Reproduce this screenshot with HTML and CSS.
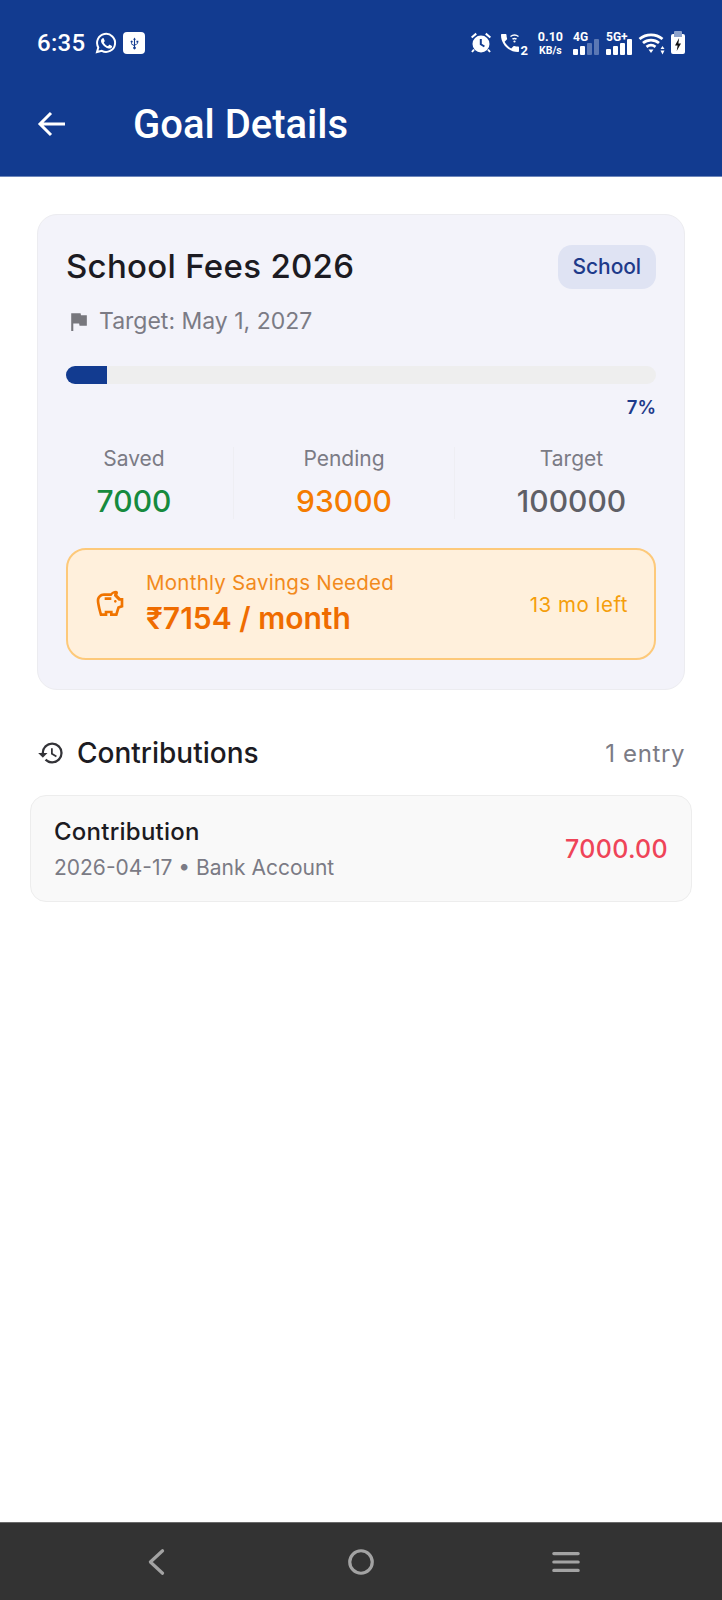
FILE: index.html
```html
<!DOCTYPE html>
<html lang="en">
<head>
  <meta charset="UTF-8" />
  <meta name="viewport" content="width=device-width, initial-scale=1.0"/>
  <title>Goal Details</title>

  <link rel="stylesheet" href="styles.css">
</head>
<body>

  <!-- Header with phone status bar -->
  <header class="app-header">
    <div class="status-bar">
      <div class="status-left">
        <span class="status-time">6:35</span>
        <svg class="icon-whatsapp" viewBox="0 0 24 24">
          <path class="wa-ring" d="M3 21l1.3-4.6A9 9 0 1 1 7.8 19.8z"/>
          <path class="wa-phone" d="M9 7.2c-.3 0-.7.1-1 .5-.4.4-1 1-1 2.300 0 1.300 1 2.600 1.100 2.800.1.200 1.900 3 4.700 4.100 2.300.9 2.800.7 3.300.7.500-.1 1.600-.7 1.800-1.300.2-.6.2-1.200.2-1.300-.1-.1-.3-.2-.5-.3l-1.900-.9c-.3-.1-.5-.1-.7.1l-.8 1.100c-.2.200-.3.200-.6.100-.3-.2-1.200-.5-2.200-1.400-.8-.7-1.400-1.600-1.500-1.900-.2-.3 0-.4.100-.6l.7-.9c.1-.2.1-.3 0-.5l-.9-2.100c-.2-.5-.5-.6-.7-.6z"/>
        </svg>
        <span class="usb-badge">
          <svg viewBox="0 0 12 14">
            <path d="M6 0.500L7.500 3H6.600V8.200L8.800 6.900V5.800H8.100V3.900H10.200V5.800H9.500V7.400L6.600 9.100V10.600A1.400 1.400 0 1 1 5.400 10.600V9.700L2.500 7.900V5.900A1.100 1.100 0 1 1 3.300 5.900V7.400L5.400 8.700V3H4.500Z"/>
          </svg>
        </span>
      </div>

      <div class="status-right">
        <svg class="icon-alarm" viewBox="0 0 24 24">
          <path d="M22 5.720l-4.600-3.860-1.290 1.530 4.600 3.860L22 5.720zM7.880 3.390L6.600 1.860 2 5.710l1.290 1.530 4.590-3.850z"/>
          <circle cx="12" cy="13" r="8.500"/>
          <path class="alarm-hand" d="M11.800 8v5.300l3.600 2.200"/>
          <path d="M5 18.500l-2 2.500M19 18.500l2 2.500" class="alarm-leg"/>
        </svg>
        <span class="call-group">
          <svg class="icon-call" viewBox="0 0 24 24">
            <path d="M6.620 10.790c1.440 2.830 3.760 5.140 6.590 6.590l2.200-2.200c.27-.27.67-.36 1.020-.24 1.120.37 2.330.57 3.570.57.550 0 1 .45 1 1V20c0 .55-.45 1-1 1-9.390 0-17-7.610-17-17 0-.55.45-1 1-1h3.500c.55 0 1 .45 1 1 0 1.250.2 2.450.57 3.570.11.35.03.74-.25 1.020l-2.200 2.200z"/>
            <path class="call-wave" d="M12.500 5.500a7 7 0 0 1 8 0M14.500 8a4 4 0 0 1 4 0"/>
            <circle cx="16.500" cy="10.500" r="1.100"/>
          </svg>
          <span class="call-sim">2</span>
        </span>
        <span class="net-speed"><b>0.10</b><b class="net-unit">KB/s</b></span>
        <span class="signal">
          <b class="signal-label">4G</b>
          <span class="bars">
            <i class="bar bar-1"></i><i class="bar bar-2"></i><i class="bar bar-3 dim"></i><i class="bar bar-4 dim"></i>
          </span>
        </span>
        <span class="signal">
          <b class="signal-label">5G+</b>
          <span class="bars">
            <i class="bar bar-1"></i><i class="bar bar-2"></i><i class="bar bar-3"></i><i class="bar bar-4"></i>
          </span>
        </span>
        <svg class="icon-wifi" viewBox="0 0 28 24">
          <path class="wifi-arc" d="M1.500 8a18 18 0 0 1 23 0M5 12a12.500 12.500 0 0 1 16 0M8.500 15.800a7.500 7.500 0 0 1 9 0"/>
          <path d="M10.500 18.500h5L13 22z"/>
          <path d="M24.500 15l2 3h-4zM24.500 23.500l-2-4h4z"/>
        </svg>
        <span class="battery"><i class="battery-cap"></i>
          <svg viewBox="0 0 10 16"><path d="M6.200 1L1.800 9h2.800L3.600 15 8.200 6.800H5.400z"/></svg>
        </span>
      </div>
    </div>

    <div class="toolbar">
      <svg class="icon-back" viewBox="0 0 32 32">
        <path d="M29 16H4M15 5L4 16l11 11"/>
      </svg>
      <h1>Goal Details</h1>
    </div>
  </header>

  <main class="content">

    <!-- Goal summary card -->
    <section class="goal-card">
      <div class="goal-top">
        <h2>School Fees 2026</h2>
        <span class="chip">School</span>
      </div>

      <div class="target-date">
        <svg viewBox="0 0 24 24"><path d="M14.400 6L14 4H5v17h2v-7h5.600l.4 2h7V6z"/></svg>
        <span>Target: May 1, 2027</span>
      </div>

      <div class="progress"><div class="progress-fill" style="width: 7%;"></div></div>
      <div class="progress-label">7%</div>

      <div class="stats">
        <div class="stat stat-saved">
          <span class="stat-name">Saved</span>
          <span class="stat-value">7000</span>
        </div>
        <div class="stat stat-pending">
          <span class="stat-name">Pending</span>
          <span class="stat-value">93000</span>
        </div>
        <div class="stat stat-target">
          <span class="stat-name">Target</span>
          <span class="stat-value">100000</span>
        </div>
      </div>

      <div class="monthly">
        <svg class="icon-piggy" viewBox="0 0 24 24">
          <path d="M15 10c0-.55.45-1 1-1s1 .45 1 1-.45 1-1 1-1-.45-1-1zM8 9h5V7H8v2zm14-1.500v6.970l-2.820.94L17.500 21H12v-2h-2v2H4.500S2 12.540 2 9.500 4.460 4 7.500 4h5c.91-1.210 2.360-2 4-2 .83 0 1.500.67 1.500 1.500 0 .21-.04.4-.12.58-.14.32-.26.69-.32 1.090l2.270 2.330H22zm-2 2h-1.500L15 6c0-.65.09-1.290.26-1.910-.97.25-1.760.97-2.090 1.910H7.500C5.570 6 4 7.570 4 9.500c0 1.880 1.220 6.650 2.010 9.500H8v-2h6v2h2.010l1.550-5.150 2.440-.82V9.500z"/>
        </svg>
        <div class="monthly-text">
          <span class="monthly-label">Monthly Savings Needed</span>
          <span class="monthly-amount">₹7154 / month</span>
        </div>
        <span class="monthly-left">13 mo left</span>
      </div>
    </section>

    <!-- Contributions list -->
    <div class="section-head">
      <svg viewBox="0 0 24 24">
        <path d="M13 3a9 9 0 0 0-9 9H1l3.890 3.890.07.14L9 12H6c0-3.870 3.130-7 7-7s7 3.130 7 7-3.130 7-7 7c-1.930 0-3.680-.79-4.940-2.060l-1.420 1.420A8.954 8.954 0 0 0 13 21a9 9 0 0 0 0-18zm-1 5v5l4.280 2.540.72-1.210-3.500-2.080V8H12z"/>
      </svg>
      <h3>Contributions</h3>
      <span class="entry-count">1 entry</span>
    </div>

    <div class="entry">
      <div class="entry-info">
        <span class="entry-title">Contribution</span>
        <span class="entry-meta">2026-04-17 • Bank Account</span>
      </div>
      <span class="entry-amount">7000.00</span>
    </div>
  </main>

  <!-- Android nav bar -->
  <nav class="nav-bar">
    <svg viewBox="0 0 24 32"><path d="M19 4L6 16l13 12"/></svg>
    <svg viewBox="0 0 32 32"><circle cx="16" cy="16" r="12"/></svg>
    <svg viewBox="0 0 32 32"><path d="M3 7h26M3 16h26M3 25h26"/></svg>
  </nav>

</body>
</html>
```

FILE: styles.css
```css
/* Global reset */
* {
  margin: 0;
  padding: 0;
  box-sizing: border-box;
}

body {
  width: 722px;
  height: 1600px;
  display: flex;
  flex-direction: column;
  font-family: 'Inter', 'Liberation Sans', sans-serif;
  background: #fff;
  color: #1c1b22;
  overflow: hidden;
}

/* Header */
.app-header {
  height: 177px;
  background: #123b90;
  color: #fff;
  border-bottom: 1px solid #6d86ba;
  font-family: 'Roboto', sans-serif;
}

.status-bar {
  height: 86px;
  padding: 0 37px 0 37px;
  display: flex;
  align-items: center;
  justify-content: space-between;
}
.status-left {
  display: flex;
  align-items: center;
}
.status-time {
  font-size: 24px;
  font-weight: 500;
  letter-spacing: 0.3px;
}
.icon-whatsapp {
  width: 24px;
  height: 24px;
  margin-left: 9px;
}
.wa-ring {
  fill: none;
  stroke: #fff;
  stroke-width: 2;
}
.wa-phone {
  fill: #fff;
}
.usb-badge {
  width: 22px;
  height: 22px;
  margin-left: 5px;
  background: #fff;
  border-radius: 4px;
  display: flex;
  align-items: center;
  justify-content: center;
}
.usb-badge svg {
  width: 11px;
  height: 13px;
  fill: #123b90;
}

.status-right {
  display: flex;
  align-items: center;
}
.icon-alarm {
  width: 24px;
  height: 24px;
  fill: #fff;
}
.alarm-hand {
  fill: none;
  stroke: #123b90;
  stroke-width: 2;
}
.alarm-leg {
  fill: none;
  stroke: #fff;
  stroke-width: 2;
}
.call-group {
  position: relative;
  width: 30px;
  height: 24px;
  margin-left: 5px;
}
.icon-call {
  width: 24px;
  height: 24px;
  fill: #fff;
}
.call-wave {
  fill: none;
  stroke: #fff;
  stroke-width: 1.500;
}
.call-sim {
  position: absolute;
  right: 0;
  bottom: -3px;
  font-size: 13px;
  font-weight: 700;
}
.net-speed {
  display: flex;
  flex-direction: column;
  align-items: center;
  margin-left: 10px;
  font-size: 12.500px;
  line-height: 15px;
}
.net-unit {
  font-size: 10.500px;
  line-height: 13px;
}
.signal {
  display: flex;
  flex-direction: column;
  align-items: flex-start;
  margin-left: 10px;
}
.signal + .signal {
  margin-left: 7px;
}
.signal-label {
  font-size: 12px;
  line-height: 12px;
  height: 12px;
}
.bars {
  display: flex;
  align-items: flex-end;
  gap: 2px;
  height: 16px;
  margin-top: -4px;
}
.bar {
  width: 5px;
  background: #fff;
  border-radius: 1px;
}
.bar.dim {
  background: #5b78b4;
}
.bar-1 { height: 6px; }
.bar-2 { height: 9px; }
.bar-3 { height: 12px; }
.bar-4 { height: 16px; }

.icon-wifi {
  width: 28px;
  height: 24px;
  margin-left: 6px;
  fill: #fff;
}
.wifi-arc {
  fill: none;
  stroke: #fff;
  stroke-width: 2.800;
}
.battery {
  position: relative;
  width: 14px;
  height: 20px;
  margin: 2px 0 0 5px;
  background: #fff;
  border-radius: 2px;
  display: flex;
  align-items: center;
  justify-content: center;
}
.battery-cap {
  position: absolute;
  top: -3px;
  left: 3px;
  width: 8px;
  height: 6px;
  background: #8ea3cc;
  border-radius: 1px 1px 0 0;
}
.battery svg {
  width: 10px;
  height: 15px;
  fill: #111;
  position: relative;
}

.toolbar {
  display: flex;
  align-items: center;
  height: 76px;
  padding-left: 36px;
}
.icon-back {
  width: 32px;
  height: 32px;
  fill: none;
  stroke: #fff;
  stroke-width: 3;
}
.toolbar h1 {
  margin-left: 65px;
  font-size: 40px;
  font-weight: 500;
}

/* Main content */
.content {
  flex: 1;
  padding: 37px 30px 0;
}

.goal-card {
  margin: 0 7px;
  height: 476px;
  padding: 30px 28px;
  background: #f3f3fa;
  border: 1px solid #ececf0;
  border-radius: 20px;
}
.goal-top {
  display: flex;
  align-items: center;
  justify-content: space-between;
}
.goal-top h2 {
  margin-bottom: 2px;
  font-size: 33px;
  font-weight: 500;
  letter-spacing: 0.3px;
}
.chip {
  padding: 10px 15px;
  font-size: 21px;
  line-height: 24px;
  font-weight: 500;
  letter-spacing: -0.1px;
  color: #1e3a8a;
  background: #dfe3f3;
  border-radius: 14px;
}

.target-date {
  display: flex;
  align-items: center;
  margin-top: 18px;
  font-size: 23px;
  color: #7b7b85;
}
.target-date svg {
  width: 25px;
  height: 25px;
  margin-right: 8px;
  fill: #77777d;
}

.progress {
  height: 18px;
  margin-top: 31px;
  background: #eeeeee;
  border-radius: 9px;
  overflow: hidden;
}
.progress-fill {
  height: 100%;
  background: #123b90;
}
.progress-label {
  margin-top: 12px;
  text-align: right;
  font-size: 18.500px;
  font-weight: 600;
  color: #1e3a8a;
}

.stats {
  display: flex;
  height: 72px;
  margin-top: 29px;
}
.stat {
  display: flex;
  flex-direction: column;
  align-items: center;
  justify-content: space-between;
  border-left: 1px solid #eeeef3;
}
.stat:first-child {
  border-left: none;
}
.stat-saved {
  width: 167px;
  padding-right: 31px;
}
.stat-pending { width: 221px; }
.stat-target {
  flex: 1;
  padding-left: 32px;
}
.stat-name {
  font-size: 21px;
  line-height: 24px;
  color: #7b7b85;
}
.stat-value {
  font-size: 30px;
  line-height: 36px;
  font-weight: 500;
}
.stat-saved .stat-value { color: #168a3e; }
.stat-pending .stat-value { color: #f57c00; }
.stat-target .stat-value { color: #5f5f66; }

.monthly {
  display: flex;
  align-items: center;
  height: 112px;
  margin-top: 29px;
  padding: 0 26px 0 26px;
  background: #fff0dc;
  border: 2px solid #fdc97a;
  border-radius: 20px;
}
.icon-piggy {
  width: 32px;
  height: 32px;
  fill: #f07400;
}
.monthly-text {
  flex: 1;
  display: flex;
  flex-direction: column;
  margin: 3px 0 0 20px;
}
.monthly-label {
  font-size: 20.500px;
  line-height: 24px;
  letter-spacing: 0.25px;
  color: #f28a1c;
}
.monthly-amount {
  font-size: 30px;
  line-height: 46px;
  font-weight: 600;
  color: #ef6c00;
}
.monthly-left {
  font-size: 20.500px;
  letter-spacing: 0.5px;
  color: #f59e0b;
}

.section-head {
  display: flex;
  align-items: center;
  margin: 46px 7px 0 7px;
}
.section-head svg {
  width: 28px;
  height: 28px;
  fill: #333338;
}
.section-head h3 {
  flex: 1;
  margin-left: 12px;
  font-size: 28px;
  font-weight: 500;
}
.entry-count {
  font-size: 24px;
  letter-spacing: 0.6px;
  color: #7b7b85;
}

.entry {
  display: flex;
  align-items: center;
  justify-content: space-between;
  height: 107px;
  margin-top: 25px;
  padding: 0 23px;
  background: #f9f9f9;
  border: 1px solid #ededed;
  border-radius: 16px;
}
.entry-info {
  display: flex;
  flex-direction: column;
}
.entry-title {
  font-size: 24px;
  line-height: 32px;
  font-weight: 500;
  letter-spacing: 0.25px;
}
.entry-meta {
  margin-top: 7px;
  font-size: 21px;
  line-height: 26px;
  color: #7b7b85;
}
.entry-amount {
  font-size: 25px;
  font-weight: 500;
  letter-spacing: 0.3px;
  color: #ef4458;
}

/* Android nav bar */
.nav-bar {
  height: 78px;
  display: flex;
  align-items: center;
  justify-content: center;
  gap: 175px;
  background: #333333;
  border-top: 1px solid #6a6a6a;
}
.nav-bar svg {
  width: 30px;
  height: 30px;
  fill: none;
  stroke: #a3a3a3;
  stroke-width: 3.400;
  stroke-linecap: round;
  stroke-linejoin: round;
}
```
